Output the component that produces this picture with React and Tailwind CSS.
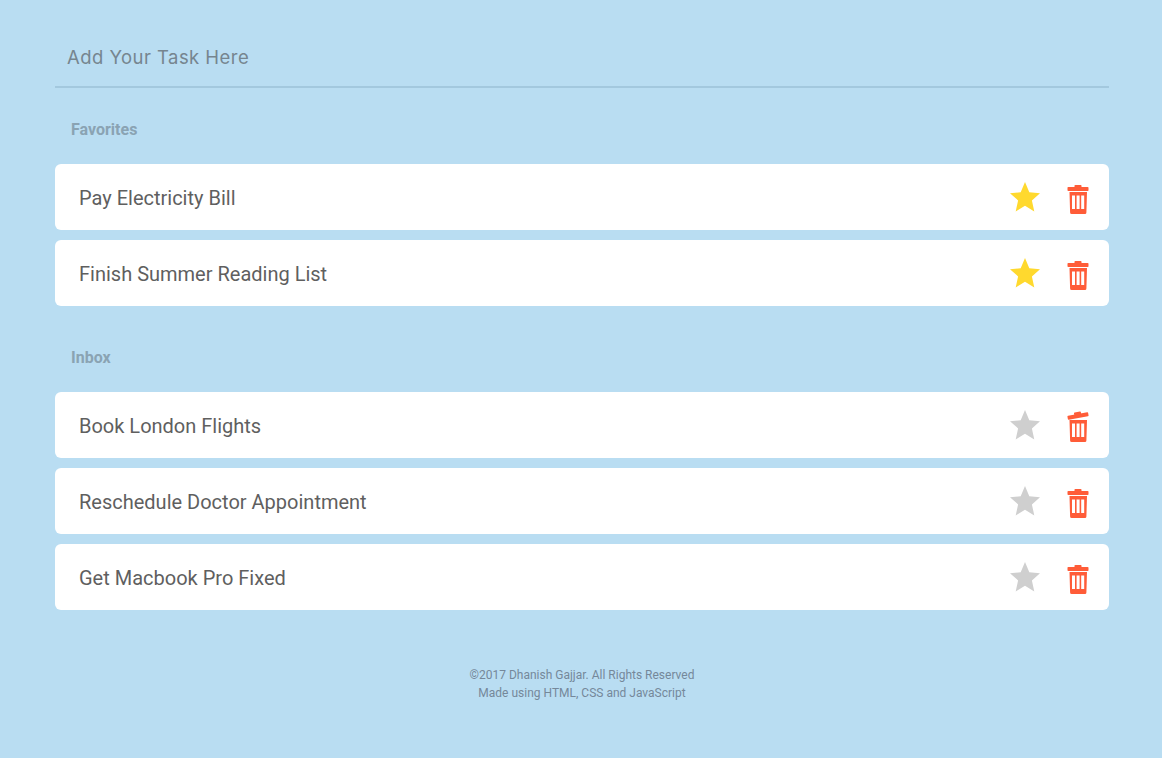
const favorites = ['Pay Electricity Bill', 'Finish Summer Reading List'];
const inbox = ['Book London Flights', 'Reschedule Doctor Appointment', 'Get Macbook Pro Fixed'];

function Star({ on }) {
  return (
    <svg width="30" height="30" viewBox="0 0 30 30" className={on ? 'fill-[#ffd92e]' : 'fill-[#cfcfcf]'}>
      <polygon points="15,0 19.3,10.2 30,11.2 21.9,18.4 24.3,29.5 15,23.7 5.7,29.5 8.1,18.4 0,11.2 10.7,10.2" />
    </svg>
  );
}

function Trash({ tilted }) {
  return (
    <svg width="22" height="29" viewBox="0 0 22 29" className="mt-[5px] overflow-visible fill-[#ff5c38]">
      <g transform={tilted ? 'translate(0 -1) rotate(-10 11 4)' : undefined}>
        <rect x="0.5" y="2" width="21" height="4" rx="0.8" />
        <rect x="7.5" y="0" width="7" height="3" rx="0.8" />
      </g>
      <path fillRule="evenodd" d="M2.5 7h17.5l-0.6 20.5a1.5 1.5 0 0 1-1.5 1.5H4.6a1.5 1.5 0 0 1-1.5-1.5zM5 10.5v13.5h3V10.5zM9.6 10.5v13.5h3V10.5zM14.2 10.5v13.5h3V10.5z" />
    </svg>
  );
}

function Task({ text, on, tilted }) {
  return (
    <li className="flex h-[66px] items-center justify-between rounded-[6px] bg-white pl-6 pr-[20px]">
      <span className="pt-[2px] text-[20px] leading-[28px] font-[450] text-[#5f5f5f]">{text}</span>
      <div className="flex items-center gap-[27px]">
        <Star on={on} />
        <Trash tilted={tilted} />
      </div>
    </li>
  );
}

export default function App() {
  return (
    <div className="min-h-[758px] bg-[#b9ddf2] pl-[55px] pr-[53px] pt-[28px] font-['Roboto',sans-serif]">
      {/* Add task */}
      <div className="flex h-[60px] items-center border-b-2 border-[#a3c8de] pl-3 pt-[2px] font-['Inter',sans-serif] text-[18.5px] tracking-[0.45px] text-[#76858f]">
        Add Your Task Here
      </div>

      <h2 className="mt-[32px] h-[20px] pl-4 text-[16px] leading-[20px] font-bold text-[#8aa3b3]">Favorites</h2>
      <ul className="mt-[24px] flex flex-col gap-[10px]">
        {favorites.map((t) => (
          <Task key={t} text={t} on />
        ))}
      </ul>

      <h2 className="mt-[42px] h-[20px] pl-4 text-[16px] leading-[20px] font-bold text-[#8aa3b3]">Inbox</h2>
      <ul className="mt-[24px] flex flex-col gap-[10px]">
        {inbox.map((t, i) => (
          <Task key={t} text={t} tilted={i === 0} />
        ))}
      </ul>

      <footer className="mt-[56px] text-center text-[12px] leading-[18px] text-[#75889a]">
        <p>©2017 Dhanish Gajjar. All Rights Reserved</p>
        <p>Made using HTML, CSS and JavaScript</p>
      </footer>
    </div>
  );
}
